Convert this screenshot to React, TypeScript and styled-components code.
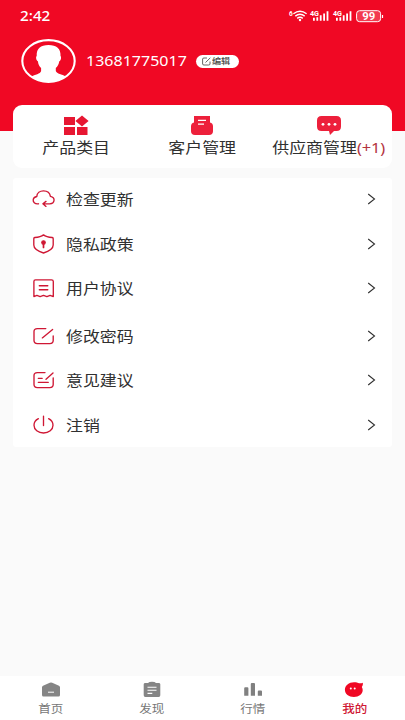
import React from "react";
import styled, { createGlobalStyle } from "styled-components";

const RED = "#f00824";
const LINE_RED = "#cf1734";

const GlobalStyle = createGlobalStyle`
  * { box-sizing: border-box; }
  body { margin: 0; background: #fafafa; font-family: "Noto Sans CJK SC", sans-serif; }
  svg { display: block; flex: none; overflow: visible; }
`;

const Page = styled.div`
  width: 405px;
  height: 720px;
  display: flex;
  flex-direction: column;
  background: #fafafa;
  overflow: hidden;
`;

const Header = styled.header`
  flex: none;
  height: 131px;
  background: ${RED};
  color: #fff;
`;

const StatusBar = styled.div`
  height: 32px;
  padding: 0 22px 0 20px;
  display: flex;
  align-items: center;
  justify-content: space-between;
`;

const WideText = styled.span<{ $size: number; $color?: string; $stretch?: number; $origin?: string; $font?: string; $weight?: number }>`
  display: inline-block;
  white-space: nowrap;
  font-size: ${(p) => p.$size}px;
  line-height: 20px;
  font-weight: ${(p) => p.$weight ?? 400};
  font-family: ${(p) => (p.$font ? `"${p.$font}", ` : "")}"Noto Sans CJK SC", sans-serif;
  color: ${(p) => p.$color ?? "#303030"};
  transform: scaleX(${(p) => p.$stretch ?? 1.16});
  transform-origin: ${(p) => p.$origin ?? "left"} center;
`;

const Profile = styled.div`
  height: 58px;
  padding-left: 21px;
  display: flex;
  align-items: center;
`;

const Phone = styled.div`
  width: 110px;
  margin-left: 10px;
  display: flex;
`;

const EditButton = styled.button`
  width: 43px;
  height: 13px;
  padding: 0 0 0 6px;
  border: 0;
  border-radius: 7px;
  background: #fff;
  display: flex;
  align-items: center;
  gap: 1px;
`;

const Shortcuts = styled.section`
  flex: none;
  height: 63px;
  margin: -26px 13px 0;
  border-radius: 9px;
  background: #fff;
  display: grid;
  grid-template-columns: repeat(3, 1fr);
`;

const Shortcut = styled.div`
  padding-top: 10px;
  display: flex;
  flex-direction: column;
  align-items: center;
  gap: 1px;
`;

const Menu = styled.section`
  flex: none;
  height: 269px;
  margin: 10px 13px 0;
  border-radius: 3px;
  background: #fff;
  display: flex;
  flex-direction: column;
  justify-content: space-between;
`;

const MenuGroup = styled.div`
  &:first-child { margin-top: -1px; }
`;

const MenuRow = styled.div`
  height: 44.5px;
  padding: 0 16px 0 19px;
  display: flex;
  align-items: center;
`;

const MenuLabel = styled.div`
  flex: 1;
  margin-left: 10.5px;
  display: flex;
`;

const TabBar = styled.nav`
  flex: none;
  height: 44px;
  margin-top: auto;
  background: #fff;
  display: grid;
  grid-template-columns: repeat(4, 1fr);
`;

const Tab = styled.div`
  padding-top: 5px;
  display: flex;
  flex-direction: column;
  align-items: center;
`;

const StatusIcons = () => (
  <svg width="94" height="16" viewBox="0 0 94 16" fill="none" stroke="#fff">
    <g fill="#fff" stroke="none" fontFamily="Roboto, sans-serif" fontWeight="700">
      <text x="0" y="7.5" fontSize="6.5">6</text>
      <text x="21" y="7.8" fontSize="6.5" textLength="9" lengthAdjust="spacingAndGlyphs">4G</text>
      <text x="44" y="7.8" fontSize="6.5" textLength="9" lengthAdjust="spacingAndGlyphs">4G</text>
      <path d="M24 9.7h1.8v3H24zM27.4 9.2h1.8v3.5h-1.8zM30.8 7.3h1.8v5.4h-1.8zM34.2 5.5H36v7.2h-1.8zM37.6 3.2h1.8v9.5h-1.8zM47 9.7h1.8v3H47zM50.4 9.2h1.8v3.5h-1.8zM53.8 7.3h1.8v5.4h-1.8zM57.2 5.5H59v7.2h-1.8zM60.6 3.2h1.8v9.5h-1.8z" />
      <circle cx="11" cy="12" r="1.2" />
      <text x="73.3" y="12" fontSize="10" textLength="13" lengthAdjust="spacingAndGlyphs">99</text>
    </g>
    <path strokeWidth="1.4" d="M4.4 5.8q6.6-5 13.2 0M6.3 8.1q4.7-3.7 9.4 0M8.2 10.4q2.8-2.2 5.6 0" />
    <rect x="67.6" y="2.7" width="24" height="11" rx="3" fill="#fff" fillOpacity=".2" strokeWidth="1" />
    <path d="M93.5 7v3" strokeWidth="1.2" />
  </svg>
);

const Avatar = () => (
  <svg width="55" height="44" viewBox="0 0 55 44">
    <ellipse cx="27.5" cy="22" rx="26.2" ry="20.9" fill={RED} stroke="#fff" strokeWidth="2.1" />
    <path fill="#fff" d="M15.7 17C15.4 9.5 19.5 6 27.5 6s12.5 3.7 12 11c1.3 1.2.2 4.8-1.2 5.2-.6 3.4-1.7 5.2-3.5 6.8v3.1c1.2 3.2 5.8 3 10.3 5.7C40.8 41.4 34.5 43 27.5 43S14 41.2 9.9 37.8c4.2-2.7 9.4-2.4 10.2-5.8v-3c-1.8-1.6-2.8-3.5-3.2-6.8-1.5-.5-2.5-4-1.2-5.2Z" />
  </svg>
);

const SmallEdit = () => (
  <svg width="9" height="9" viewBox="0 0 9 9" fill="none" stroke="#555" strokeWidth=".9">
    <path d="M5 1H2Q.6 1 .6 2v5Q.6 8 2 8h4.5Q8 8 8 7V4.5M3.5 5.5 8.3.8" />
  </svg>
);

const CategoryIcon = () => (
  <svg width="26" height="21" viewBox="0 0 26 21" fill="#e71732">
    <path d="M1 2h11v8H1zM1 12h11v8H1zM14 12h10.5v8H14zM19 .5l6.6 5.5L19 11.5 12.4 6z" />
  </svg>
);

const CustomerIcon = () => (
  <svg width="24" height="21" viewBox="0 0 24 21">
    <path fill="#ed203b" d="M4 1h16v6.5q3 .8 3 3.8v5q0 3.7-4 3.7H5q-4 0-4-3.7v-5q0-3 3-3.8z" />
    <path stroke="#fff" strokeWidth="1.2" d="M8 5.4h8M8 9.2h6" />
  </svg>
);

const SupplierIcon = () => (
  <svg width="26" height="21" viewBox="0 0 26 21">
    <path fill="#ed203b" d="M5.5 1h15q4.5 0 4.5 4.5v6q0 4.5-4.5 4.5H18l-4 4-1-4H5.5Q1 16 1 11.5v-6Q1 1 5.5 1Z" />
    <g fill="#fff"><circle cx="7" cy="9.3" r="1.4" /><circle cx="13" cy="9.3" r="1.4" /><circle cx="19" cy="9.3" r="1.4" /></g>
  </svg>
);

const lineIcons: Record<string, React.ReactNode> = {
  update: <path d="M6.5 14.8C2.5 15.2 1 13 1.2 10.8 1.4 8.8 2.8 7.8 4.8 7.5 5 3.8 8 1.8 11.5 1.8s6.4 2 6.9 5.6c2.4.6 4 2 3.6 4.3-.3 2-1.8 3.1-4.2 3.1h-6M14 12.4l-3.1 2.4L14 17.4" />,
  privacy: (
    <>
      <path d="M11.5.9C9.5 2.5 6 3.3 2.8 3.5q-1 .2-1 1.2V11c0 4 5 6.5 9.7 8 4.7-1.5 9.7-4 9.7-8V4.7q0-1-1-1.2C17 3.3 13.5 2.5 11.5.9Z" />
      <path d="M11.5 9v4.5" strokeWidth="1.7" />
      <circle cx="11.5" cy="8.5" r="1.7" fill={LINE_RED} />
    </>
  ),
  terms: <path d="M3.5 1.8h16q1.8 0 1.8 1.8v15l-3.2-1.2-3.2 1.2-3.4-1.2-3.4 1.2-3.2-1.2-3 1.2v-15q0-1.8 1.6-1.8ZM7.3 7.7h8.5M7.3 11.7h8.5" />,
  password: <path d="M13.8 2.6H5.4Q2 2.6 2 5.6v9q0 3 3.4 3h12.4q3.4 0 3.4-3V10M10.3 11.9 20.6 3.5" />,
  feedback: <path d="M13 2.6H5.4Q2 2.6 2 5.6v9q0 3 3.4 3h12.4q3.4 0 3.4-3V7.8M14 9.2l7-6.2M6.3 8.3h3.9M6.3 12.3h10" />,
  logout: <path d="M11.5 1.2v9.3M6.4 3.7C3.7 5.1 2 7.5 2 10.2c0 4.3 4.2 7.8 9.5 7.8s9.5-3.5 9.5-7.8c0-2.7-1.7-5.1-4.4-6.5" />,
};

const LineIcon = ({ name }: { name: string }) => (
  <svg width="23" height="20" viewBox="0 0 23 20" fill="none" stroke={LINE_RED} strokeWidth="1.35" strokeLinecap="round" strokeLinejoin="round">
    {lineIcons[name]}
  </svg>
);

const Chevron = () => (
  <svg width="9" height="12" viewBox="0 0 9 12" fill="none" stroke="#303030" strokeWidth="1.1">
    <path d="m1.2 1 6.3 5-6.3 5" />
  </svg>
);

const tabIcons: Record<string, React.ReactNode> = {
  home: <><path fill="#858585" d="M1 6.3q0-1 1-1.5L8.8 1.7q1.2-.6 2.4 0L18 4.8q1 .5 1 1.5V14q0 1.5-1.5 1.5h-15Q1 15.5 1 14Z" /><path stroke="#fff" strokeWidth="1" d="M7 11.2h6" /></>,
  discover: <><path fill="#858585" d="M3.3 1.9H6Q7 .8 10 .8t4 1.1h2.7q1.6 0 1.6 1.4v11q0 1.7-1.6 1.7H3.3q-1.6 0-1.6-1.7v-11q0-1.4 1.6-1.4Z" /><path stroke="#fff" strokeWidth="1.1" d="M5.5 6.2h9M5.5 9.3h9M5.5 12.4h4.8" /></>,
  market: <path fill="#808080" d="M1.2 7.3q0-1 1-1h2.2q1 0 1 1v7.5H1.2zM7.8 3q0-1 1-1h2.2q1 0 1 1v11.8H7.8zM14.8 10.5q0-1 1-1h2.2q1 0 1 1v4.3h-4.2z" />,
  mine: <><path fill={RED} d="M10 1.2c2.3 0 3.8.4 5.2 1.1 1.5.2 2.6-.3 3.6-.6.3 1.8-.2 3.2-1 4.2.6 1 .9 2 .9 3.1 0 4-3.7 6.9-8.8 6.9S.9 13 .9 8.7s4-7.5 9.1-7.5Z" /><g fill="#fff"><circle cx="6.8" cy="7.4" r="1" /><circle cx="10.7" cy="7.4" r="1" /></g></>,
};

const shortcuts = [
  { label: "产品类目", icon: <CategoryIcon /> },
  { label: "客户管理", icon: <CustomerIcon /> },
  { label: "供应商管理", count: "(+1)", icon: <SupplierIcon /> },
];

const groups = [
  [["update", "检查更新"], ["privacy", "隐私政策"], ["terms", "用户协议"]],
  [["password", "修改密码"], ["feedback", "意见建议"], ["logout", "注销"]],
];

const tabs = [["home", "首页"], ["discover", "发现"], ["market", "行情"], ["mine", "我的"]];

const Count = styled.span`
  color: #b4343f;
  font-family: "Noto Sans", sans-serif;
  font-size: 14.2px;
  letter-spacing: -0.15px;
`;

export default function App() {
  return (
    <Page>
      <GlobalStyle />
      <Header>
        <StatusBar>
          <WideText $size={14} $color="#fff" $font="Noto Sans" $weight={500} $stretch={1.09}>2:42</WideText>
          <StatusIcons />
        </StatusBar>
        <Profile>
          <Avatar />
          <Phone>
            <WideText $size={14} $color="#fff" $font="Noto Sans" $stretch={1.145}>13681775017</WideText>
          </Phone>
          <EditButton>
            <SmallEdit />
            <WideText $size={8} $color="#444" $stretch={1.14} $weight={500}>编辑</WideText>
          </EditButton>
        </Profile>
      </Header>
      <Shortcuts>
        {shortcuts.map((item) => (
          <Shortcut key={item.label}>
            {item.icon}
            <WideText $size={14.6} $origin="center">
              {item.label}
              {item.count && <Count>{item.count}</Count>}
            </WideText>
          </Shortcut>
        ))}
      </Shortcuts>
      <Menu>
        {groups.map((rows, index) => (
          <MenuGroup key={index}>
            {rows.map(([icon, label]) => (
              <MenuRow key={icon}>
                <LineIcon name={icon} />
                <MenuLabel><WideText $size={14.6}>{label}</WideText></MenuLabel>
                <Chevron />
              </MenuRow>
            ))}
          </MenuGroup>
        ))}
      </Menu>
      <TabBar>
        {tabs.map(([icon, label]) => (
          <Tab key={icon}>
            <svg width="20" height="17" viewBox="0 0 20 17" fill="none">{tabIcons[icon]}</svg>
            <WideText $size={10.8} $origin="center" $color={icon === "mine" ? "#cf1734" : "#777"} $weight={icon === "mine" ? 500 : 400}>{label}</WideText>
          </Tab>
        ))}
      </TabBar>
    </Page>
  );
}
